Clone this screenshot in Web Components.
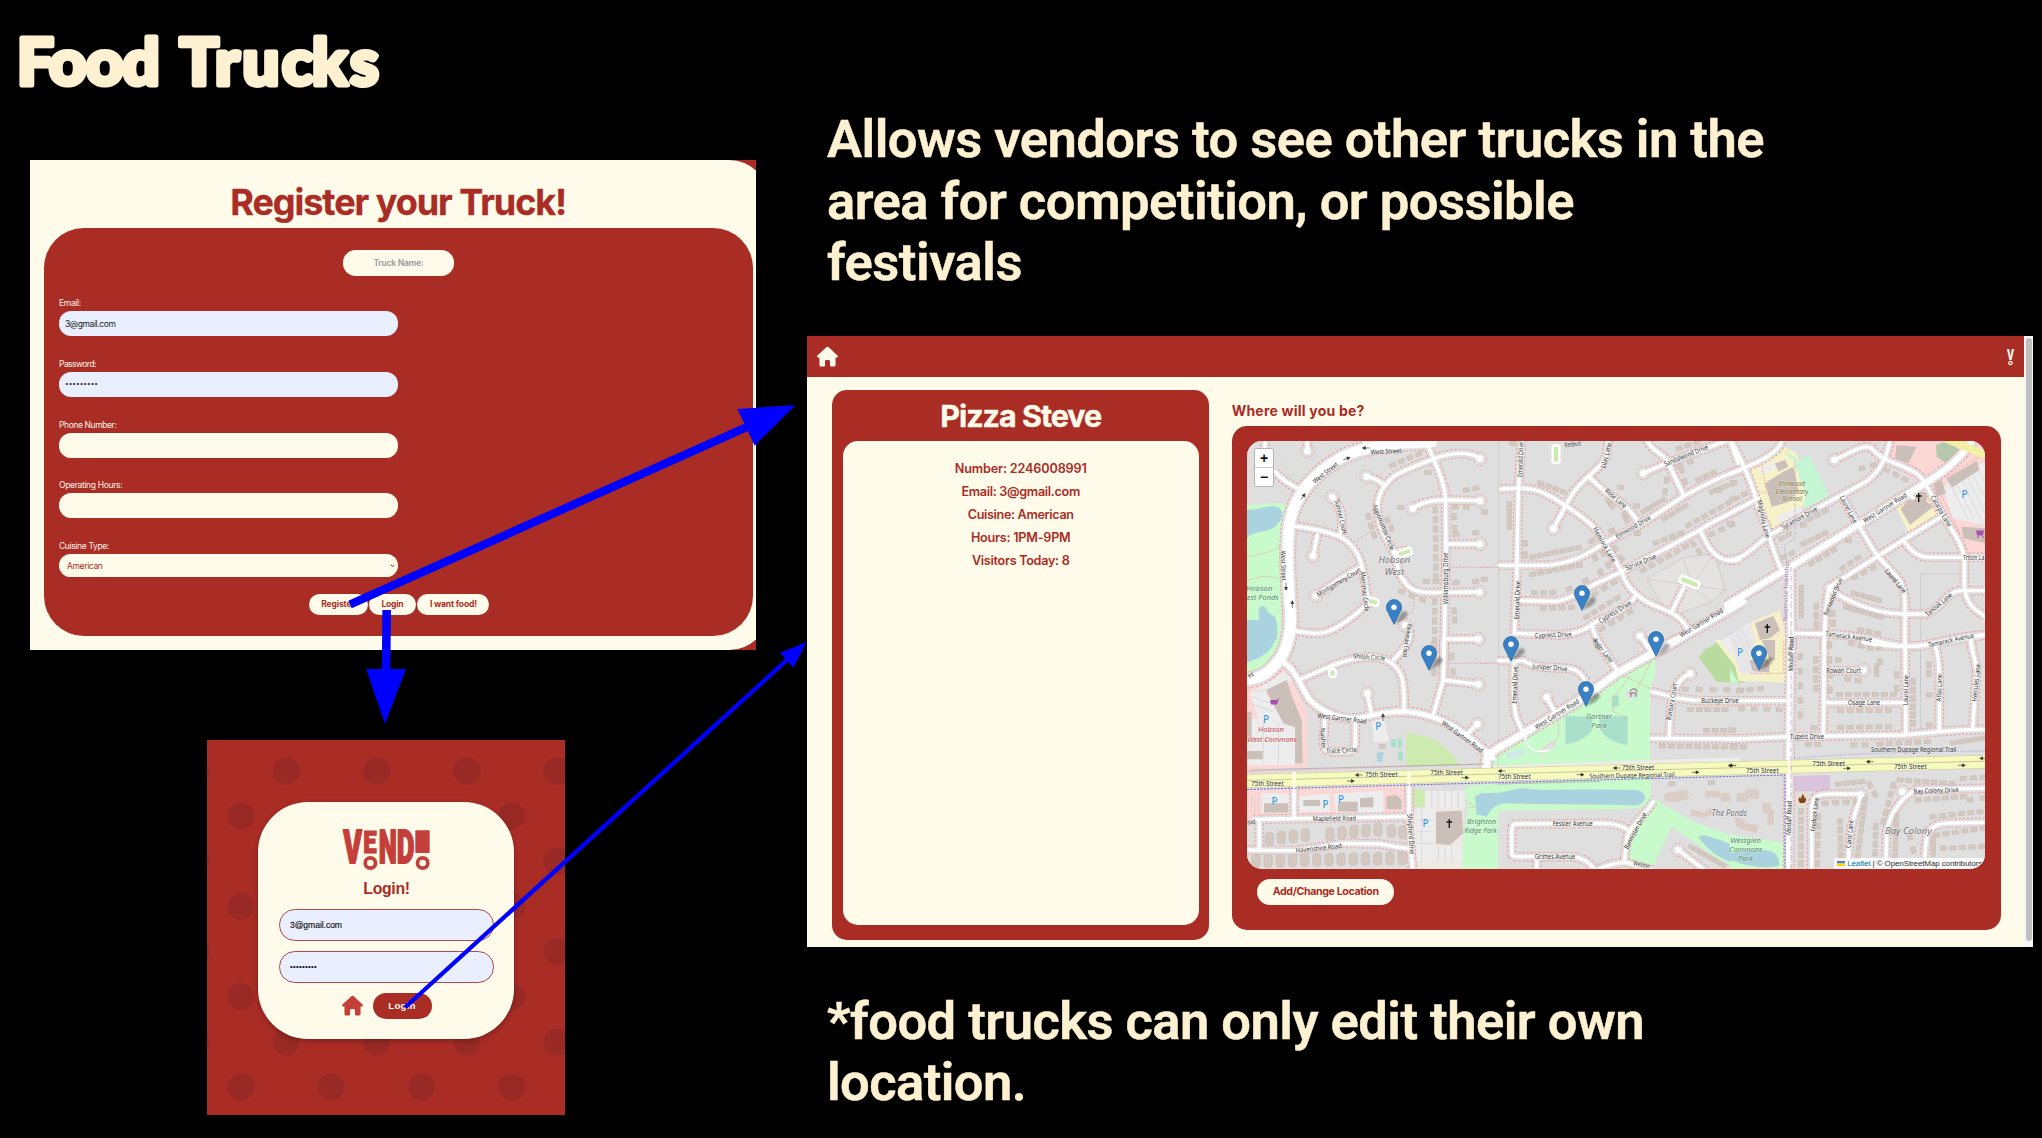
<!DOCTYPE html>
<html lang="en">
<head>
<meta charset="utf-8">
<title>Food Trucks</title>
<style>
  html, body { margin: 0; background: #000; }
  body { width: 2042px; height: 1138px; overflow: hidden; font-family: Inter, "Liberation Sans", sans-serif; }
</style>
</head>
<body>
<slide-board>
  <slide-title slot="left">Food Trucks</slide-title>
  <register-panel slot="left"></register-panel>
  <login-panel slot="left"></login-panel>
  <slide-note slot="right" style="margin-top:109px">
    <fit-text w="937">Allows vendors to see other trucks in the</fit-text>
    <fit-text w="747">area for competition, or possible</fit-text>
    <fit-text w="195">festivals</fit-text>
  </slide-note>
  <vendor-app slot="right"></vendor-app>
  <slide-note slot="right" style="margin-top:43.8px">
    <fit-text w="817">*food trucks can only edit their own</fit-text>
    <fit-text w="199">location.</fit-text>
  </slide-note>
  <flow-arrows slot="over"></flow-arrows>
</slide-board>

<script>
const define = (name, html, after) => customElements.define(name, class extends HTMLElement {
  connectedCallback() {
    if (this.shadowRoot) return;
    const root = this.attachShadow({ mode: 'open' });
    root.innerHTML = typeof html === 'function' ? html(this) : html;
    if (after) after(this, root);
  }
});

const HOUSE = 'M12 .8 C12.8 .8 13.3 1.2 14 1.9 L23.2 10.6 C24.4 11.8 23.8 13.2 22.2 13.2 H21.2 V21.6 Q21.2 23.4 19.4 23.4 H16.2 Q14.8 23.4 14.8 22 V17.4 Q14.8 16 13.4 16 H10.6 Q9.2 16 9.2 17.4 V22 Q9.2 23.4 7.8 23.4 H4.6 Q2.8 23.4 2.8 21.6 V13.2 H1.8 C.2 13.2 -.4 11.8 .8 10.6 L10 1.9 C10.7 1.2 11.2 .8 12 .8 Z';

define('slide-board', `
<style>
  :host { display: grid; grid-template-columns: 807px 1235px; width: 2042px; height: 1138px; position: relative; background: #000; overflow: hidden; }
  .col { display: flex; flex-direction: column; align-items: flex-start; }
</style>
<div class="col"><slot name="left"></slot></div>
<div class="col"><slot name="right"></slot></div>
<slot name="over"></slot>`);

define('slide-title', el => `
<style>:host { display: block; height: 160px; width: 807px; } svg { display: block; overflow: visible; }
text { font: 900 65px Lato, "Liberation Sans", sans-serif; fill: #fdf1d2; stroke: #fdf1d2; stroke-width: 5; stroke-linejoin: round; }</style>
<svg width="500" height="130"><text x="17 49 86 122.500 165 179.500 215 242.500 282 312 350" y="85">${el.textContent}</text></svg>`);

define('slide-note', `
<style>:host { display: flex; flex-direction: column; align-items: flex-start; margin-left: 20px; font: 600 52.5px/61.5px Roboto, sans-serif; color: #fef1d2; -webkit-text-stroke: .5px #fef1d2; }</style><slot></slot>`);

define('pill-field', el => `
<style>
  :host { display: block; height: 39px; margin-bottom: 21.8px; }
  .label { height: 14px; font-size: 8.5px; line-height: 12px; color: #fdf3e6; }
  .box { box-sizing: border-box; width: 339.5px; height: 25px; border-radius: 12px; background: #fffbea; display: flex; align-items: center; padding: 0 3px 0 6px; font-size: 8.5px; color: #222; line-height: 12px; }
  :host([filled]) .box { background: #e9effe; }
  :host([select]) .box { height: 23px; color: #a92c25; justify-content: space-between; padding-left: 8px; }
</style>
<div class="label"><fit-text w="${el.getAttribute('lw')}">${el.getAttribute('label')}</fit-text></div>
<div class="box"><slot></slot>${el.hasAttribute('select') ? '<svg width="5" height="4"><path d="M.8 .8 L2.5 2.8 L4.2 .8" fill="none" stroke="#a92c25"/></svg>' : ''}</div>`);

define('pill-button', `
<style>
  :host { display: flex; align-items: center; justify-content: center; box-sizing: border-box; border-radius: 99px; background: #fffbea; color: #a92c25; font-weight: 700; white-space: nowrap; }
</style><slot></slot>`);

define('register-panel', `
<style>
  :host { display: block; margin-left: 30px; width: 726px; height: 490px; background: #a92c25; overflow: hidden; }
  .page { width: 739px; height: 490px; background: #fffbea; border-radius: 0 40px 40px 0; overflow: hidden; box-sizing: border-box; padding-top: 20px; }
  h1 { margin: 0 0 4px 14px; width: 708.5px; text-align: center; font-size: 36px; line-height: 44px; font-weight: 700; color: #a92c25; -webkit-text-stroke: .3px #a92c25; }
  .card { margin-left: 14.2px; width: 708.5px; height: 408px; box-sizing: border-box; border-radius: 40px; background: #a92c25; padding: 22px 14.8px 0; }
  .name { width: 110.5px; height: 25.5px; border-radius: 12.5px; margin: 0 auto 21.5px; color: #a3a3a0; font-size: 8.5px; }
  .row { display: flex; justify-content: center; gap: 1.7px; margin-left: 1px; }
  .row pill-button { height: 21px; font-size: 8.5px; }
  pill-field[select] { height: 37px; margin-bottom: 16.4px; }
</style>
<div class="page">
  <h1><fit-text w="336">Register your Truck!</fit-text></h1>
  <div class="card">
    <pill-button class="name"><fit-text w="50">Truck Name:</fit-text></pill-button>
    <pill-field label="Email:" lw="22" filled><fit-text w="50.5">3@gmail.com</fit-text></pill-field>
    <pill-field label="Password:" lw="37" filled><fit-text w="33" style="font-size:6.5px">•••••••••</fit-text></pill-field>
    <pill-field label="Phone Number:" lw="57.5"></pill-field>
    <pill-field label="Operating Hours:" lw="63.3"></pill-field>
    <pill-field label="Cuisine Type:" lw="50" select style="height:37px;margin-bottom:16.4px"><fit-text w="35.5">American</fit-text></pill-field>
    <div class="row">
      <pill-button style="width:59px"><fit-text w="33.5">Register</fit-text></pill-button>
      <pill-button style="width:46.5px"><fit-text w="22">Login</fit-text></pill-button>
      <pill-button style="width:72px"><fit-text w="47">I want food!</fit-text></pill-button>
    </div>
  </div>
</div>`);

define('vend-logo', `
<style>:host { display: block; width: 87px; height: 41px; } svg { display: block; overflow: visible; } text { font: 900 100px Roboto, sans-serif; fill: #c43e3a; stroke: #c43e3a; stroke-width: 4; stroke-linejoin: round; }</style>
<svg width="87" height="41" viewBox="0 0 261 123" fill="#c43e3a">
  <g transform="translate(0 101) scale(1 1.36)">
    <text x="1" y="-1" textLength="56" lengthAdjust="spacingAndGlyphs">V</text>
    <text x="107" y="-1" textLength="54" lengthAdjust="spacingAndGlyphs">N</text>
    <text x="161" y="-1" textLength="53" lengthAdjust="spacingAndGlyphs">D</text>
  </g>
  <g transform="translate(0 69) scale(1 .92)"><text x="61" y="-1" textLength="40" lengthAdjust="spacingAndGlyphs">E</text></g>
  <rect x="217" y="1" width="43" height="68" rx="3"/>
  <g fill="none" stroke="#fffbea" stroke-width="30"><circle cx="82" cy="99" r="11"/><circle cx="239" cy="99" r="11"/></g>
  <g fill="none" stroke="#c43e3a" stroke-width="11"><circle cx="82" cy="99" r="15.5"/><circle cx="239" cy="99" r="15.5"/></g>
</svg>`);

define('login-panel', `
<style>
  :host { display: block; box-sizing: border-box; margin: 90px 0 0 207px; width: 358px; height: 375px; padding: 62px 0 0 51.2px;
    background-color: #a92c25;
    background-image: radial-gradient(circle at center, #982924 13px, transparent 13.8px), radial-gradient(circle at center, #982924 13px, transparent 13.8px);
    background-size: 90.3px 90.3px; background-position: 34.15px -14.15px, -11.15px 30.85px; }
  .card { width: 255.5px; height: 237px; border-radius: 50px; background: #fffbea; box-shadow: 0 2px 5px #0004; box-sizing: border-box; padding: 27.5px 0 0 1.2px; display: flex; flex-direction: column; align-items: center; }
  h2 { margin: 8.2px 0 10.8px; font: 700 15.8px/20px "Liberation Sans", sans-serif; color: #a92c25; }
  .in { width: 214.5px; height: 31.5px; box-sizing: border-box; border: 1px solid #b04a52; border-radius: 15.8px; background: #e9effe; margin-bottom: 10.3px; display: flex; align-items: center; padding-left: 9.7px; font: 8.6px/12px "Liberation Sans", sans-serif; color: #111; -webkit-text-stroke: .15px #111; }
  .row { display: flex; gap: 10px; align-items: center; }
  pill-button { width: 59px; height: 25.5px; background: #a92c25; color: #fffbea; font: 700 9.8px/12px "Liberation Sans", sans-serif; }
</style>
<div class="card">
  <vend-logo></vend-logo>
  <h2><fit-text w="46.5">Login!</fit-text></h2>
  <div class="in"><fit-text w="52">3@gmail.com</fit-text></div>
  <div class="in"><fit-text w="27" style="font-size:7.5px">•••••••••</fit-text></div>
  <div class="row"><svg width="21" height="21" viewBox="0 0 24 24"><path d="${HOUSE}" fill="#c43e3a"/></svg>
  <pill-button><fit-text w="27.5">Login</fit-text></pill-button></div>
</div>`);

define('vendor-app', `
<style>
  :host { display: flex; width: 1226px; height: 611px; margin-top: 42.5px; background: #fffbea; }
  .main { width: 1217px; }
  header { height: 41px; background: #a92c25; display: flex; justify-content: space-between; align-items: center; padding: 0 10px 0 10px; }
  .mark { display: flex; }
  .mark svg { overflow: visible; }
  .mark text { font: 900 15px Roboto, sans-serif; fill: #fffbea; }
  .bar { width: 9px; background: #f6f6f4; box-sizing: border-box; padding: 2px 1px 6px 2px; display: flex; }
  .bar i { flex: 1; border-radius: 3px; background: #bfbfbf; }
  .cols { display: flex; padding: 13px 0 0 25.3px; gap: 22.9px; }
  .info { width: 376.5px; height: 550px; border-radius: 15px; background: #a92c25; box-sizing: border-box; padding: 0 10px 0 10.3px; }
  h2 { margin: 0; height: 51px; box-sizing: border-box; padding-top: 6px; text-align: center; font-size: 30.5px; line-height: 40px; font-weight: 700; color: #fffbea; -webkit-text-stroke: .4px #fffbea; }
  .sheet { height: 484px; border-radius: 15px; background: #fffbea; box-sizing: border-box; padding-top: 15.5px; display: flex; flex-direction: column; align-items: center; font-size: 12.6px; line-height: 23px; font-weight: 600; color: #a92c25; }
  h3 { margin: 0; height: 35.7px; font-size: 14px; line-height: 41px; font-weight: 700; color: #a92c25; }
  .where { width: 769px; }
  .mapcard { height: 504.3px; border-radius: 15px; background: #a92c25; box-sizing: border-box; padding: 15.3px 15.5px 0; }
  .mapcard pill-button { width: 137px; height: 26px; margin: 10px 0 0 10px; font-size: 10.6px; }
</style>
<div class="main">
  <header>
    <svg width="21" height="21" viewBox="0 0 24 24"><path d="${HOUSE}" fill="#fffbea"/></svg>
    <span class="mark"><svg width="7" height="16"><text x="0" y="10.700" textLength="7" lengthAdjust="spacingAndGlyphs">V</text><circle cx="3.5" cy="14" r="1.700" fill="none" stroke="#fffbea" stroke-width="1.200"/></svg></span>
  </header>
  <div class="cols">
    <div class="info">
      <h2><fit-text w="161">Pizza Steve</fit-text></h2>
      <div class="sheet">
        <fit-text w="132">Number: 2246008991</fit-text>
        <fit-text w="118.5">Email: 3@gmail.com</fit-text>
        <fit-text w="106">Cuisine: American</fit-text>
        <fit-text w="99.5">Hours: 1PM-9PM</fit-text>
        <fit-text w="97.5">Visitors Today: 8</fit-text>
      </div>
    </div>
    <div class="where">
      <h3><fit-text w="133">Where will you be?</fit-text></h3>
      <div class="mapcard">
        <street-map></street-map>
        <pill-button><fit-text w="106">Add/Change Location</fit-text></pill-button>
      </div>
    </div>
  </div>
</div>
<div class="bar"><i></i></div>`);

/* ---- Map data. Each tile has its own origin and is drawn at one third scale. ---- */
const TILE = { A: [1230, 420], B: [1480, 420], C: [1730, 320], D: [1230, 640], E: [1480, 640], F: [1730, 640] };

const AREAS = {
  A: [['#c8facc', 'M50 255 L140 250 L182 256 L160 310 L152 640 Q140 730 50 775Z'],
      ['#aad3df', 'M50 270 L80 268 Q150 245 158 280 Q150 330 90 335 L60 345 L50 357Z M50 600 L88 600 Q80 560 98 558 Q115 564 112 575 L135 590 Q152 640 130 680 Q100 715 50 730Z']],
  B: [['#e4e3e1', 'M500 475 L610 415 L700 410 L735 510 L690 545 L570 590Z'],
      ['#b9dba0', 'M670 690 L780 640 V700 H670Z'], ['#eeeeee', 'M715 665 L780 630 V700 H735Z']],
  C: [['#fbd8d5', 'M490 363 H765 V600 L690 640 L600 500 L470 430Z M665 605 L765 620 V712 H703Z'],
      ['#f6f2c8', 'M45 450 L160 380 L200 400 L240 540 L150 610 L120 645 L85 540Z'],
      ['#c4f6d4', 'M195 430 L237 403 L297 527 L220 568 L225 530Z M163 395 L195 410 L200 425 L180 415Z'],
      ['#ededed', 'M640 500 L765 425 V615 L665 595Z M140 590 L210 560 L220 580 L145 610Z M85 445 L130 425 L140 445 L95 465Z'],
      ['#b5c8ae', 'M618 375 L650 363 L690 390 L650 430 L620 410Z'],
      ['#f6f2c8', 'M495 555 L600 500 L632 580 L535 635Z'],
      ['#cbbfba', 'M105 490 L160 455 L190 440 L205 510 L180 545 L125 560Z M535 430 L560 380 L500 375 L495 415Z M650 475 L740 423 L748 450 L665 503Z M610 490 L635 480 L648 520 L620 530Z M695 620 L765 625 V670 L700 655Z M512 568 L535 540 L550 535 L545 515 L590 515 L590 545 L610 560 L540 615Z M135 430 L165 420 L175 440 L145 455Z'],
      ['#f6eecb', 'M65 905 L150 870 L170 960 V990 H60Z'], ['#e8e8ea', 'M0 950 L60 905 L85 990 H0Z'],
      ['#cbbfba', 'M75 910 L130 888 L150 930 L120 955 L90 960Z']],
  D: [['#c8facc', 'M50 0 H165 Q150 60 50 95Z'], ['#aad3df', 'M50 0 H135 Q125 45 50 68Z'],
      ['#fbd8d5', 'M50 135 L165 88 L232 215 V380 L50 392Z M50 450 L530 436 V527 L50 537Z'],
      ['#ededed', 'M60 160 L165 95 L190 120 L105 155 L165 255 L195 260 V375 H50 V240 L85 235Z M425 240 L460 232 L478 305 H432Z M95 458 L180 462 V520 H95Z M200 470 L300 460 V515 H205Z M310 462 L460 452 V520 H318Z'],
      ['#efe9e4', 'M545 510 L700 500 V690 H550Z'],
      ['#ededed', 'M560 505 H610 V665 H560Z M585 453 H705 V505 H585Z M610 620 H695 V665 H610Z'],
      ['#cdebb0', 'M528 278 Q640 285 690 378 H528Z M545 445 L585 450 V500 H545Z'],
      ['#c8facc', 'M705 440 L790 430 V690 H695 L700 590 L712 520Z'],
      ['#aad3df', 'M735 470 Q750 455 790 460 V525 L740 525Z M440 338 L462 335 L455 365 H442Z'],
      ['#aae0cb', 'M483 297 h15 v25 h-15z M503 295 h13 v28 h-13z M504 338 q8 -12 15 0 v20 q-8 12 -15 0z'],
      ['#cbbfba', 'M108 150 L170 120 L190 180 L215 240 L218 370 H195 V262 L160 250Z M50 215 H65 V290 H50Z M50 333 H98 V358 H50Z M102 490 H175 V518 H102Z M220 480 H270 V498 H220Z M324 485 H383 V515 H324Z M390 475 L430 472 V502 H390Z M468 470 L500 465 L515 480 V508 H470Z M618 515 L695 512 L700 580 L660 615 L618 612Z']],
  E: [['#c8facc', 'M522 40 L528 100 L510 150 V362 L25 378 Q20 345 60 328 L310 185Z'],
      ['#c8facc', 'M0 436 L512 412 V500 L420 508 L55 512 V690 H0Z'],
      ['#c8facc', 'M525 480 L640 545 L790 600 V690 L720 660 L575 560 L515 690 H430 L455 590Z'],
      ['#eeece9', 'M0 378 L780 352 V366 L0 388Z'],
      ['#aad3df', 'M0 460 L60 458 L120 445 L190 450 L320 448 L440 450 Q495 445 495 475 Q490 502 440 495 L250 493 L80 490 Q40 490 20 530 L0 525Z M655 590 Q670 580 690 590 Q760 610 800 640 V680 Q700 660 655 590Z'],
      ['#aae0cb', 'M256 228 L336 230 L338 268 Q310 308 256 312Z M443 228 L357 230 L360 268 Q385 308 443 315Z M397 168 L415 164 L418 198 L398 202Z'],
      ['#cfe9e6', 'M78 340 L130 325 L134 348 L82 356Z'], ['#e6dede', 'M172 335 L218 300 L230 315 L182 345Z M436 155 L465 145 L475 165 L440 180Z'],
      ['#b9dba0', 'M655 50 L720 0 L790 110 V130 L710 125Z'], ['#f6f2c8', 'M705 0 H790 V110Z'], ['#ececec', 'M720 0 H790 V100Z'],
      ['#d9cdc5', 'M555 460 l30 -5 35 -5 8 25 -40 12 -35 -5z M676 452 h45 v20 h-45z M722 460 h28 v25 h-28z M635 508 l40 10 15 -15 12 20 -30 10 -42 -8z']],
  F: [['#c8facc', 'M0 582 L162 610 V690 H0Z M0 85 L25 128 H0Z'], ['#f6f2c8', 'M0 0 H165 V128 L25 122Z'],
      ['#e6e6e8', 'M0 0 H75 L60 60 L100 105 L30 100Z'], ['#cbbfba', 'M58 60 h60 v38 l-50 -5z M95 0 h40 v60 h-15z'],
      ['#d9c4dd', 'M192 408 L300 405 V452 L192 455Z'], ['#eadbd2', 'M188 460 H232 V495 H188Z'],
      ['#aad3df', 'M0 640 Q80 620 130 636 Q152 655 146 678 Q80 690 0 660Z'],
      ['#d9cdc5', 'M20 460 h25 v-12 h42 v28 h-35 v10 h-32z M97 490 h25 v20 h10 v45 h-20 v-35 h-15z M15 530 l30 10 0 10 42 5 -8 25 -55 -15 -8 -15z']]
};

// [path, width]
const ROADS = {
  A: ['M105 60 V90 M135 155 Q160 185 212 210', 'M232 60 V93', 'M405 75 V58', 'M307 231 C335 265 345 310 328 348',
      'M192 318 C250 325 300 338 330 350 C380 378 395 420 402 470 C408 510 412 530 416 545 L436 546', 'M412 552 C360 600 330 620 300 632 C270 645 240 640 190 632',
      'M262 345 L249 408', 'M392 442 C340 465 300 500 257 528', 'M410 170 Q440 175 465 197',
      'M750 116 C710 90 650 100 603 120 C560 136 520 150 490 170 C450 205 436 240 445 290 C450 330 470 360 490 392 C508 430 496 450 520 480 C540 510 560 518 600 518 L748 516',
      'M590 66 C605 110 645 180 647 240 L648 400 L642 690 L640 780', 'M548 266 Q580 240 650 240 L750 242', 'M648 372 H750', 'M642 657 H745',
      'M525 612 C552 640 542 670 490 720', 'M490 398 L535 390'],
  B: ['M125 60 L115 210 L110 480 L103 640', 'M62 207 C160 200 180 210 230 240 C300 285 320 300 350 330 C380 380 400 410 425 455 C440 500 460 520 500 545 C560 575 600 580 622 625',
      'M220 326 C240 290 255 260 275 225 C310 170 375 140 380 100 L385 60', 'M328 172 L380 220 C420 245 455 270 475 308',
      'M58 436 L200 436 C290 430 340 390 380 365 C440 335 470 320 510 295 L612 228 C680 190 720 170 780 150',
      'M122 542 L230 544 C280 535 310 510 350 490 L425 455 L520 405 L660 330 C700 300 740 290 780 262',
      'M103 640 L240 645 C300 640 320 625 350 605 C400 585 450 560 468 525', 'M335 612 Q345 660 380 700', 'M500 60 C520 100 555 100 565 130 L612 228',
      'M490 160 L560 130 L740 62', 'M660 330 C680 370 690 400 730 418 Q755 425 780 418', 'M575 575 L612 500', 'M480 648 L510 690', 'M750 62 L775 130', 'M228 85 V115', 'M608 480 L650 497'],
  C: ['M3 360 C40 430 70 500 85 560 L110 620 C120 660 135 710 155 750', 'M0 462 C50 440 140 410 155 365', 'M0 580 L85 535',
      'M0 720 C50 715 80 670 120 645 L270 560 L400 490 C440 465 465 430 480 363',
      'M313 420 C370 395 400 370 425 385 C450 415 470 420 520 440 C550 455 570 460 585 490', 'M335 530 L385 615 L440 705 L500 770 Q525 800 525 850 L525 990',
      'M585 490 L640 590 C680 650 700 680 703 720 L703 800 C710 860 740 870 765 890', 'M635 590 L520 660 L300 800 C285 850 285 900 283 990',
      'M520 660 C540 690 560 712 600 712 L765 712', 'M300 810 C350 840 420 880 520 882 L590 882 C640 860 650 815 690 812 L765 812',
      'M185 940 L290 942 C400 945 450 970 520 978 C600 985 650 950 765 945', 'M720 950 L728 1000', 'M535 515 L550 535'],
  D: ['M210 118 C270 95 330 60 400 52 C460 45 500 70 515 110 C525 150 522 180 522 215', 'M305 85 V105', 'M412 160 L425 225', 'M285 235 L280 310 Q285 335 300 335 L360 335 Q376 335 376 300 L376 240',
      'M642 0 L640 120 L608 230', 'M640 120 L745 133', 'M705 290 L742 252', 'M192 400 V535', 'M70 538 L530 530', 'M537 400 V560 L548 690', 'M50 630 L200 632 L340 610 L450 612 L545 628', 'M88 540 V630'],
  E: ['M103 65 C98 140 100 200 110 235 L135 290', 'M55 62 L130 62 C170 85 200 82 270 85 Q300 90 318 125', 'M200 172 L228 222', 'M350 0 L412 92', 'M515 155 C560 165 600 182 680 182 L780 182',
      'M630 101 C580 120 570 180 568 290', 'M512 295 L780 297', 'M450 575 Q430 555 380 550 L105 552 Q95 552 95 580 V640 Q95 650 110 650 H280 Q320 655 345 690', 'M520 485 C490 530 440 570 440 600 L433 665',
      'M350 690 Q400 665 440 668 L520 690', 'M595 630 L680 695', 'M170 650 V690', 'M490 0 L525 40'],
  F: ['M283 0 L280 285', 'M525 0 L528 280', 'M615 15 C630 60 628 100 628 272', 'M722 0 L740 90 L728 268', 'M285 92 H400', 'M285 188 H520',
      'M0 298 L170 290 L520 285 L630 275 L700 270 L765 268', 'M0 182 H175', 'M245 690 V500 C250 470 260 462 300 462 L392 462 C380 520 355 540 355 690',
      'M765 445 L560 448 C500 480 475 540 470 575 L468 655', 'M765 547 L640 550 C590 560 588 580 585 650', 'M400 8 C470 20 520 20 560 18 Q620 10 765 -15']
};
const MAJOR = {
  A: [['M605 66 C480 70 400 78 330 115 C220 180 182 260 176 330 C170 400 174 480 180 560 C188 620 175 690 140 730 C110 765 90 775 40 782', 32]],
  B: [['M540 690 L790 545', 18]],
  C: [['M-10 856 L190 735 L385 615 L585 490 C640 455 690 420 725 363', 18], ['M180 740 L183 990', 16]],
  D: [['M155 62 C200 90 210 140 240 180 C280 220 340 245 400 232 C450 220 520 200 610 232 C680 255 730 300 790 355', 14], ['M772 335 L765 385', 18]],
  E: [['M20 385 C18 340 45 330 80 310 L300 180 L410 100 L590 0', 20]],
  F: [['M182 0 L178 290 L176 690', 16]]
};
const DOTS = { A: [[232,93],[307,231],[249,408],[257,528],[410,170],[750,116],[548,266],[750,242],[750,372],[748,516],[745,657],[525,615]], B: [[220,326],[490,160],[480,648]],
  C: [[313,420],[300,805]], D: [[412,160],[745,133],[742,252]], E: [[200,172],[630,101],[595,630]], F: [[400,90],[517,455],[392,464]] };
const THIN = {
  A: ['M50 410 Q120 400 150 378', 'M370 372 Q420 330 438 332', 'M50 485 Q100 460 145 475', 'M545 580 Q565 520 520 500', 'M648 442 H780'],
  B: ['M0 442 H60'], D: ['M640 70 H780', 'M50 395 L765 372', 'M705 480 L735 500 L710 505'],
  E: ['M0 70 H55', 'M235 215 V290 L215 320', 'M520 50 L470 150 M405 95 L510 145 M450 110 L395 180 L400 215 L440 235'],
  C: ['M95 430 L110 520 L60 510 M620 500 L690 640', 'M650 470 L765 400'], F: ['M60 100 H160 V0']
};
// [x1, y1, x2, y2, count]
const ROWS = {
  A: [[488,135,566,102,4],[616,270,618,470,8],[672,290,674,325,2],[676,262,710,262,2],[709,210,737,205,2],[678,343,737,338,2],[678,488,737,484,2],[590,484,618,484,2],[515,515,577,540,3],[614,545,614,690,6],[672,572,674,600,2],[415,290,432,346,3],[473,300,484,325,2],[594,158,594,158,1],[512,262,512,262,1],[763,276,763,276,1],[763,478,763,478,1]],
  B: [[182,190,250,215,4],[88,255,88,320,4],[135,370,135,405,2],[158,411,295,383,7],[158,463,298,436,7],[163,518,218,518,3],[190,566,275,562,4],[268,507,316,482,2],[335,363,395,332,2],[345,414,362,456,2],[370,400,385,435,2],[405,385,425,415,2],[385,245,395,258,2],[345,522,402,487,3],[320,590,412,534,5],[367,626,450,576,4],[434,285,440,300,2],[422,202,422,202,1],[470,258,470,258,1],[492,274,548,240,4],[555,295,615,258,4],[555,215,560,180,2],[605,150,615,185,2],[598,138,631,125,2],[655,178,700,158,3],[597,85,650,67,3],[697,215,760,190,4],[528,368,602,340,4],[626,315,770,235,7],[490,450,617,380,6],[640,372,657,395,2],[695,342,755,315,3],[98,70,98,70,1],[472,341,472,341,1],[714,212,714,212,1]],
  C: [[10,487,10,487,1],[8,535,43,522,2],[0,610,8,615,1],[155,655,176,643,2],[160,712,185,700,2],[222,670,285,640,4],[240,597,285,573,3],[220,615,220,615,1],[395,445,430,435,2],[470,450,525,478,3],[245,730,312,690,4],[338,744,384,714,3],[355,662,355,662,1],[375,772,430,744,3],[372,820,445,840,5],[350,862,450,890,6],[214,805,214,885,5],[259,860,259,915,3],[308,880,310,910,2],[392,930,443,940,3],[365,970,420,985,3]],
  D: [[665,50,669,95,2],[612,15,612,98,3],[457,320,457,320,1]],
  E: [[616,147,782,150,5],[632,209,735,209,5],[680,271,757,271,4],[547,318,760,321,9],[576,431,694,428,2],[635,622,730,675,7]],
  F: [[28,152,92,146,3],[35,206,148,208,4],[5,270,5,270,1],[14,321,40,321,2],[211,50,211,225,5],[257,60,257,145,4],[252,263,252,263,1],[298,15,300,150,4],[325,60,325,60,1],[353,117,384,122,2],[440,80,440,100,2],[328,163,490,163,7],[332,212,475,212,6],[332,262,475,260,6],[500,105,500,145,2],[550,125,550,250,6],[597,75,597,100,2],[598,165,598,165,1],[598,255,598,255,1],[235,313,263,313,2],[372,315,405,315,2],[450,312,592,305,6],[671,308,757,295,5],[448,22,450,65,2],[325,432,395,425,4],[420,435,435,462,2],[510,420,665,430,7],[700,415,760,412,3],[490,436,460,545,5],[213,515,213,670,7],[265,530,262,670,6],[285,490,380,485,4],[330,545,332,670,6],[405,480,380,670,9],[437,560,435,665,5],[565,480,700,470,6],[720,480,760,475,2],[610,530,750,515,6],[620,585,760,565,6],[500,530,495,650,6],[610,600,610,640,3],[640,625,755,620,5],[540,590,550,630,2]]
};
// Large detached homes along Maplefield and Havenshire
const HOMES = [];
for (let i = 0; i < 9; i++) HOMES.push([118 + i * 36 + (i > 3 ? 38 : 0), 597 - i * 3.5]);
HOMES.push([484, 574], [518, 578]);
for (let i = 0; i < 13; i++) HOMES.push([78 + i * 36.5, 665 - i * .8]);

// [text, x, y, angle, length, kind]
const LABELS = {
  A: [['West Street',468,94,-3,92],['West Street',286,158,-38,90],['West Street',161,437,88,90],['Sumner Court',333,290,76,105],['Appomattox Circle',461,322,68,145],['Montgomery Court',326,486,-31,150],
      ['Merrimac Circle',405,515,84,118],['Williamsburg Drive',646,475,-90,155],['Kennesaw Court',532,662,98,100],['Hobson',493,419,0,95,'p'],['West',493,454,0,58,'p'],['Hobson',88,506,0,78,'g'],['est Ponds',98,533,0,95,'g']],
  B: [['Emerald Drive',121,118,-88,105],['Emerald Drive',111,540,-88,115],['Lilac Lane',378,106,-76,78],['Redbud',278,72,-8,48],['Sandalwood Drive',618,106,-22,140],['Rose Lane',408,235,40,78],['Elmwood Drive',459,321,-30,118],['Hemlock Lane',374,374,60,118],['Spruce Drive',482,426,-22,98],['Cypress Drive',405,575,-31,110],['Cypress Drive',220,644,-2,110],['West Gartner Road',664,608,-31,148],['Aster',350,672,72,38]],
  C: [['Elmwood',186,492,0,78,'s'],['Elementary',186,514,0,98,'s'],['School',186,537,0,58,'s'],['Magnolia Lane',101,597,77,115],['Sycamore Drive',208,594,-29,120],['Laurel Lane',356,568,62,90],['West Gartner Road',465,563,-32,150],['Catalpa Lane',634,573,60,105],['Triton La',731,712,0,64],['Laurel Lane',497,783,50,88],['Barkwood Drive',309,830,-67,120],['Tanoak Lane',626,853,-40,98],['Tamarack Avenue',356,949,7,140],['Tamarack Avenue',663,960,-12,140],['Naperville Township',167,813,-88,180,'t'],['Road',183,970,-88,40]],
  D: [['et',62,104,-22,18],['Shiloh Circle',418,51,4,95],['West Gartner Road',336,235,7,148],['Nasher',280,295,86,62],['Trace Circle',334,331,-3,92],['West Gartner Road',698,290,36,148],['75th Street',454,404,0,98],['75th Street',650,398,0,98],['75th Street',112,431,0,98],['Maplefield Road',313,535,-1,130],['Havenshire Road',266,624,-6,138],['Shepherd Drive',543,582,86,122],['oad',64,545,-5,24],
      ['Hobson',123,269,0,78,'r'],['West Commons',126,297,0,150,'r'],['Brighton',755,544,0,88,'g'],['Ridge Park',752,570,0,98,'g']],
  E: [['Juniper Drive',210,82,5,105],['Emerald Drive',104,135,-88,112],['West Gartner Road',231,222,-32,152],['Aster Lane',370,32,52,85],['Gartner',357,230,0,78,'g'],['Park',357,256,0,46,'g'],['Barbara Court',575,185,-80,110],['Buckeye Drive',720,182,0,112],['75th Street',474,383,0,98],['75th Street',103,411,0,98],['Southern Dupage Regional Trail',456,406,-1,256],['Fessler Avenue',278,551,0,120],['Grimes Avenue',225,650,0,122],['Bannister Drive',466,572,-62,122],['Weston',485,674,12,50],['The Ponds',748,519,0,105,'p']],
  F: [['Modaff Road',183,42,-89,104],['Rowan Court',341,91,0,104],['Osage Lane',402,189,0,96],['Laurel Lane',527,150,-89,90],['Atlas Lane',627,143,-88,82],['Hercules Lane',738,128,-84,112],['Tupelo Drive',231,290,0,102],['Southern Dupage Regional Trail',551,328,0,256],['75th Street',296,370,0,98],['75th Street',541,381,0,98],['75th Street',97,393,0,98],['Modaff Road',176,534,-88,102],['Fredrick Lane',254,523,-84,102],['Carol Lane',359,582,-84,84],['Bay Colony Drive',618,451,-2,136],['Bay Colony',535,573,0,140,'p'],['Westglen',47,601,0,92,'g'],['Commons',47,628,0,100,'g'],['Park',47,656,0,46,'g']]
};
const PARKS = { C: [[704,524]], D: [[108,237],[445,258],[134,483],[287,492],[333,477],[587,549]], F: [[30,38]] };
const ARROWS = { A: [[350,116,-20],[408,84,180],[219,230,-55],[168,500,90],[187,553,-90]], D: [[387,405,180],[362,423,0],[705,413,0],[459,232,-90]], E: [[411,384,180],[301,404,0],[66,393,180],[646,397,0],[756,377,180]], F: [[8,376,180],[420,365,180],[350,385,0],[695,376,0],[760,355,180]] };
const LABEL_STYLE = { p: [27,'#6f6d72','italic'], g: [23,'#4d8560','italic'], r: [23,'#c33b44','italic'], s: [20,'#736d2c','italic'], t: [19,'#9a76a5','normal'] };
const PINS = [[1394.3,624.3],[1429,670.7],[1582,610],[1510.7,661.7],[1656,656],[1586.3,706],[1759,670]];

const eachTile = (data, fn) => Object.keys(data).map(k => `<g transform="translate(${TILE[k]}) scale(.33333)">${data[k].map(fn).join('')}</g>`).join('');

function houses([x1, y1, x2, y2, n]) {
  const a = n > 1 ? Math.atan2(y2 - y1, x2 - x1) * 180 / Math.PI : 0;
  const steep = Math.abs(a) > 60;
  let out = '';
  for (let i = 0; i < n; i++) {
    const t = n > 1 ? i / (n - 1) : 0, x = x1 + (x2 - x1) * t, y = y1 + (y2 - y1) * t;
    const w = steep ? 14 : 19, h = steep ? 19 : 13;
    const r = steep ? (a > 0 ? a - 90 : a + 90) : a;
    out += `<rect x="${-w / 2}" y="${-h / 2}" width="${w}" height="${h}" transform="translate(${x.toFixed(1)} ${y.toFixed(1)}) rotate(${r.toFixed(1)})"/>`;
  }
  return out;
}

function mapSvg() {
  const areas = eachTile(AREAS, ([c, d]) => `<path fill="${c}" d="${d}"/>`);
  const base = (w, extra) => eachTile(ROADS, d => `<path d="${d}" stroke-width="${10 + w}" ${extra}/>`) + eachTile(MAJOR, ([d, s]) => `<path d="${d}" stroke-width="${s + w}" ${extra}/>`);
  const dots = (r, extra) => eachTile(DOTS, ([x, y]) => `<circle cx="${x}" cy="${y}" r="${r}" ${extra}/>`);
  const labels = eachTile(LABELS, ([t, x, y, a, len, k]) => {
    const [s, c, st] = LABEL_STYLE[k] || [20, '#2c2c2c', 'normal'];
    return `<text transform="translate(${x} ${y}) rotate(${a})" y="${s * .36}" textLength="${len}" lengthAdjust="spacingAndGlyphs" font-size="${s}" font-style="${st}" fill="${c}">${t}</text>`;
  });
  return `<svg width="738" height="428" viewBox="1247 441 738 428">
  <rect x="1247" y="441" width="738" height="428" fill="#e0dfdf"/>
  ${areas}
  <g transform="translate(1230 640) scale(.33333)" fill="none" stroke="#d0d0d2" stroke-width="2">
    <path d="M65 170 L125 190 M60 190 L130 215 M75 155 L110 150 M50 300 H195 M100 240 V370 M145 250 V370 M60 312 V330 M575 505 V665 M560 540 H610 M560 575 H610 M560 610 H610 M605 453 V505 M625 453 V505 M645 453 V505 M665 453 V505 M685 453 V505 M625 620 V665 M645 620 V665 M665 620 V665 M65 470 V520 M75 470 V520 M85 470 V520"/></g>
  <g transform="translate(1730 320) scale(.33333)" fill="none" stroke="#d3d3d8" stroke-width="2">
    <path d="M665 500 L715 600 M680 490 L735 603 M697 480 L755 608 M712 470 L765 580 M728 462 L765 535 M745 450 L765 490 M5 950 L35 1000 M20 940 L55 1005 M36 928 L72 1010"/></g>
  <g fill="none" stroke="#bdbcbc" stroke-width=".5"><path d="M1498.500 441 V761 M1498 761 V784 M1920.500 695 V574 H1961 M1920.500 654 V730"/>
    <path d="M1647 579 L1683 558 L1715 553 L1725 590 L1711 602 L1670 617 Z M1647 579 L1690 585 L1725 590 M1683 558 L1692 584 L1715 553 M1690 585 L1711 602"/></g>
  <g fill="none" stroke="#e99" stroke-width="2.200" stroke-dasharray="6 4">${eachTile(THIN, d => `<path d="${d}"/>`)}</g>
  <g fill="none" stroke="#ee9c9c" stroke-dasharray="7 5" stroke-linejoin="round">${base(18.5, '')}${dots(20, 'stroke-width="2.500"')}</g>
  <g fill="none" stroke="#e0dfdf" stroke-linejoin="round">${base(13, '')}</g>
  <g fill="#e0dfdf">${dots(18, '')}</g>
  <g fill="#d3c9c1" stroke="#bdb0a7" stroke-width="1">${eachTile(ROWS, houses)}
    <g transform="translate(1230 640) scale(.33333)">${HOMES.map(([x, y]) => `<path transform="translate(${x} ${y.toFixed(1)})" d="M-13 -14 L-6 -20 H8 L13 -14 V8 L9 18 H-8 L-13 10Z"/>`).join('')}</g></g>
  <g fill="none" stroke="#fff" stroke-linejoin="round" stroke-linecap="round">${base(0, '')}</g>
  <g fill="#fff">${dots(10, '')}</g>
  <g stroke="#fff" stroke-width="2.500" fill="#cdebb0">
    <rect x="1397" y="549.500" width="14.500" height="6.500" rx="2.500" transform="rotate(-18 1404 552)"/><rect x="1368" y="598.500" width="11" height="6.500" rx="3" transform="rotate(20 1373 601)"/>
    <rect x="1552.500" y="445.500" width="7" height="17.500" rx="2.500"/><rect x="1679.500" y="578.500" width="20" height="7" rx="2.500" transform="rotate(22 1689 582)"/><rect x="1329" y="669" width="7" height="8" rx="3"/></g>
  <g fill="none"><path d="M1247 781 L1985 761.700" stroke="#c9c98f" stroke-width="13.500"/><path d="M1247 781 L1985 761.700" stroke="#f7fabf" stroke-width="12.500"/>
    <path d="M1247 780.500 L1985 761.200" stroke="#a9a878" stroke-width=".6"/>
    <path d="M1940 436 L1985 455" stroke="#f2f0a4" stroke-width="8"/>
    <path d="M1294 773 V788 M1409 771 V786 M1789.500 760 V774" stroke="#fffde0" stroke-width="3.500"/>
    <path d="M1247 789.500 L1410 785 L1785 775 V869" stroke="#5556d8" stroke-width=".9" stroke-dasharray="2 1.400"/>
    <path d="M1794 758.500 Q1860 752 1985 751" stroke="#7d7ee0" stroke-width=".8" stroke-dasharray="1 1.600"/>
    <path d="M1250 770 L1485 764 M1498 784 L1600 781.500" stroke="#8f8f8f" stroke-width=".5"/>
    <path d="M1791 567 V869" stroke="#b48fbe" stroke-width=".7" stroke-dasharray="5 1.500 1 1.500"/>
    <path d="M1787 562 L1784 546 L1795 538 L1795 460" stroke="#c0a3c8" stroke-width=".7" stroke-dasharray="4 1.500"/>
    <path d="M1287 460 Q1290 480 1285 530 L1287 600" stroke="#bbb" stroke-width=".5" stroke-dasharray=".6 3"/>
    <path d="M1525 737 C1528 752 1538 753 1550 750" stroke="#fff" stroke-width="1.600"/></g>
  <g text-anchor="middle" font-family="'Noto Sans','Open Sans',sans-serif" stroke="#fff" stroke-opacity=".6" stroke-width="2.500" paint-order="stroke" stroke-linejoin="round">${labels}
    ${eachTile(PARKS, ([x, y]) => `<text x="${x}" y="${y + 11}" font-size="30" fill="#3795d8" font-weight="500">P</text>`)}</g>
  ${eachTile(ARROWS, ([x, y, a]) => `<path transform="translate(${x} ${y}) rotate(${a})" d="M-11 0 H4 M2 -4.500 L11 0 L2 4.500Z" stroke="#333" stroke-width="1.800" fill="#333"/>`)}
  <g stroke="#111" stroke-width="1.300" fill="none"><path d="M1918.700 493 v9 M1916 496 h5.500 M1767.300 624 v9 M1764.600 627 h5.500 M1449.300 819 v9 M1446.600 822 h5.500"/></g>
  <g fill="#a84fae"><path d="M1976 530.500 h8 l-1 5 h-6z M1270 700 h7 l1 -1.500 h1 l-2 6 h-6z M1977 536.500 h2 v1 h-2z M1982 536.500 h2 v1 h-2z"/></g>
  <path d="M1800 803 q-3 -4 0 -6 l1 2 q0 -3 2 -5 q2 3 1 5 l1.500 -2 q1.500 4 -1.500 6z" fill="#7b4515"/>
  <path d="M1629 693 h7 M1630 691 l2.500 -2 h3 l2 3 M1631 693 v4 M1636 693 v4" stroke="#666" stroke-width=".9" fill="none"/>
  </svg>`;
}

define('map-pin', `
<style>:host { position: absolute; display: block; width: 28px; height: 26px; } svg { display: block; overflow: visible; }</style>
<svg width="28" height="26"><defs><filter id="b" x="-.5" y="-.5" width="2" height="2"><feGaussianBlur stdDeviation="1.2"/></filter></defs>
<path d="M8 25 L16 13 Q21 11 22 15 Q20 21 8 25Z" fill="#0005" filter="url(#b)"/>
<path d="M8 25.300 L2 13.200 Q.4 10.800 .4 8.300 A7.600 7.700 0 0 1 15.600 8.300 Q15.600 10.800 14 13.200Z" fill="#3a80c4" stroke="#2e6da4" stroke-width=".8"/><circle cx="8" cy="8.300" r="2.700" fill="#fff"/></svg>`);

define('street-map', () => `
<style>
  :host { display: block; position: relative; width: 738px; height: 428px; border-radius: 15px; overflow: hidden; background: #e0dfdf; }
  svg { display: block; }
  .zoom { position: absolute; left: 7px; top: 7.500px; width: 20px; height: 39px; box-sizing: border-box; border: 1px solid #b5b5b5; border-radius: 2.500px; background: #fff; display: flex; flex-direction: column; font: 700 14px/18px "Liberation Sans", sans-serif; text-align: center; color: #111; }
  .zoom span { height: 18px; } .zoom span + span { border-top: 1px solid #ccc; }
  .credit { position: absolute; right: 0; bottom: 0; width: 151px; height: 10.500px; box-sizing: border-box; padding: 0 3px; display: flex; align-items: center; gap: 2px; background: #fffc; font: 8px/10px "Liberation Sans", sans-serif; color: #333; white-space: nowrap; }
  a { color: #0078a8; }
</style>
${mapSvg()}
${PINS.map(([x, y]) => `<map-pin style="left:${(x - 1255).toFixed(1)}px;top:${(y - 466.3).toFixed(1)}px"></map-pin>`).join('')}
<div class="zoom"><span>+</span><span>−</span></div>
<div class="credit"><svg width="8" height="5"><rect width="8" height="2.500" fill="#4c7be1"/><rect y="2.500" width="8" height="2.500" fill="#ffd500"/></svg><fit-text w="135"><a>Leaflet</a> | © OpenStreetMap contributors</fit-text></div>`);

define('flow-arrows', `
<style>:host { position: absolute; inset: 0; pointer-events: none; } svg { display: block; }</style>
<svg width="2042" height="1138" fill="#00f" stroke="#00f">
  <path d="M350 604.500 L748 426.500" stroke-width="8.200"/><path stroke="none" d="M795.500 405 L737.500 409 L754.700 445.700Z"/>
  <path d="M386.700 610 L386 672" stroke-width="8.600"/><path stroke="none" d="M385 724 L366 669 L406 669Z"/>
  <path d="M405 1007.500 L788 659" stroke-width="4.300"/><path stroke="none" d="M806.500 642 L780 652.700 L793.500 667.700Z"/>
</svg>`);

/* Spreads a line of text over the width given by its "w" attribute. */
define('fit-text', `<style>:host { display: inline-block; white-space: nowrap; } span { display: inline-block; }</style><span><slot></slot></span>`, (el, root) => {
  const span = root.querySelector('span');
  const n = el.textContent.length;
  const gap = (parseFloat(el.getAttribute('w')) - span.getBoundingClientRect().width) / n;
  span.style.letterSpacing = gap.toFixed(3) + 'px';
});
</script>
</body>
</html>
